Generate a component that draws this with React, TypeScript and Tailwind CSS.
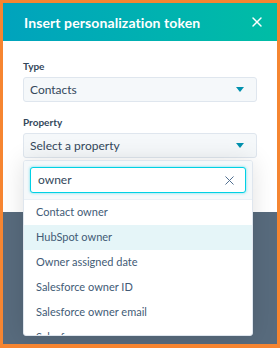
import { X } from 'lucide-react'

const items = [
  'Contact owner',
  'HubSpot owner',
  'Owner assigned date',
  'Salesforce owner ID',
  'Salesforce owner email',
  'Salesforce owner name',
]

const Caret = () => (
  <svg width="8" height="5" viewBox="0 0 8 5" className="text-[#0091ae]">
    <path d="M0 0h8L4 5z" fill="currentColor" />
  </svg>
)

const Select = ({ text }: { text: string }) => (
  <div className="flex items-center justify-between h-[25px] px-[6px] pr-[12px] rounded-[3px] border border-[#dfe6ee] bg-[#f5f8fa] text-[12px] text-[#33475b]">
    <span>{text}</span>
    <Caret />
  </div>
)

const App = () => {
  return (
    <div
      className="w-[280px] h-[348px] bg-[#f68531] pt-[3px] pl-[3px] pr-[3px] pb-[4px]"
      style={{ fontFamily: 'Lato, "Open Sans", sans-serif' }}
    >
      <div className="relative h-full bg-[#586b7d] overflow-hidden">
        <div className="flex items-center justify-between h-[38px] pl-[21px] pr-[12px] bg-gradient-to-r from-[#00a3bd] to-[#00bda5] text-white">
          <h1 className="text-[14px] font-bold tracking-[0.1px]">Insert personalization token</h1>
          <X size={16} strokeWidth={2.2} />
        </div>
        <div className="h-[171px] bg-white px-[20px] pt-[19px]">
          <p className="text-[10px] font-bold text-[#33475b] leading-[12px] mb-[5px]">Type</p>
          <Select text="Contacts" />
          <p className="text-[10px] font-bold text-[#33475b] leading-[12px] mt-[14px] mb-[5px]">Property</p>
          <Select text="Select a property" />
        </div>
        <div className="absolute left-[20px] top-[157px] w-[230px] h-[176px] bg-white border border-[#dfe6ee] rounded-[3px] shadow-[0_1px_24px_rgba(0,0,0,0.12)] overflow-hidden">
          <div className="bg-[#f5f8fa] px-[6px] py-[6px] border-b border-[#eaf0f6]">
            <div className="flex items-center justify-between h-[26px] px-[7px] rounded-[3px] border border-[#00d0e4] bg-white shadow-[0_0_3px_rgba(0,208,228,0.6)] text-[12px] text-[#33475b]">
              <span>owner</span>
              <X size={15} strokeWidth={1.6} className="text-[#516f90] mr-[1px]" />
            </div>
          </div>
          {items.map((item, i) => (
            <div
              key={item}
              className={`h-[25px] flex items-center px-[12px] text-[11px] text-[#425b76] ${i === 1 ? 'bg-[#e5f5f8]' : ''}`}
            >
              {item}
            </div>
          ))}
        </div>
      </div>
    </div>
  )
}

export default App
